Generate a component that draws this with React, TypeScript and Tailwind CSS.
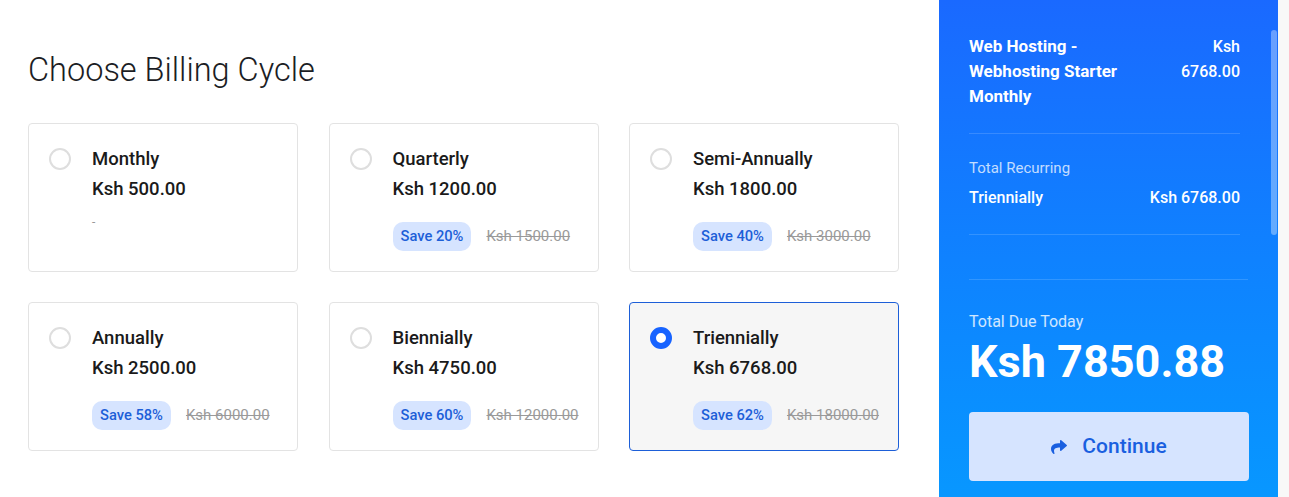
import React from 'react';
import { FaShare } from 'react-icons/fa';

interface Cycle {
  name: string;
  price: string;
  save?: string;
  was?: string;
}

const cycles: Cycle[] = [
  { name: 'Monthly', price: 'Ksh 500.00' },
  { name: 'Quarterly', price: 'Ksh 1200.00', save: 'Save 20%', was: 'Ksh 1500.00' },
  { name: 'Semi-Annually', price: 'Ksh 1800.00', save: 'Save 40%', was: 'Ksh 3000.00' },
  { name: 'Annually', price: 'Ksh 2500.00', save: 'Save 58%', was: 'Ksh 6000.00' },
  { name: 'Biennially', price: 'Ksh 4750.00', save: 'Save 60%', was: 'Ksh 12000.00' },
  { name: 'Triennially', price: 'Ksh 6768.00', save: 'Save 62%', was: 'Ksh 18000.00' },
];

const CycleCard: React.FC<{ cycle: Cycle; selected: boolean }> = ({ cycle, selected }) => {
  return (
    <div
      className={`h-[149px] rounded-[4px] border flex px-5 pt-[20px] ${
        selected ? 'bg-[#f6f6f6] border-[#1d5fd8]' : 'bg-white border-[#e3e3e3]'
      }`}
    >
      <div className="pt-[4px] shrink-0">
        {selected ? (
          <div className="w-[22px] h-[22px] rounded-full border-[6px] border-[#1763ff] bg-white" />
        ) : (
          <div className="w-[22px] h-[22px] rounded-full border-2 border-[#dedede] bg-white" />
        )}
      </div>
      <div className="ml-[21px] whitespace-nowrap">
        <div className="text-[18.5px] leading-[30px] font-medium text-[#1a1a1a]">{cycle.name}</div>
        <div className="text-[18.5px] leading-[30px] font-medium text-[#1a1a1a]">{cycle.price}</div>
        {cycle.save ? (
          <div className="mt-[18px] flex items-center">
            <span className="shrink-0 h-[29px] px-[8px] rounded-[10px] bg-[#d6e4ff] text-[#1d5fd8] text-[14.7px] font-medium flex items-center">
              {cycle.save}
            </span>
            <span className="shrink-0 ml-[15px] text-[15px] text-[#9a9a9a] line-through">{cycle.was}</span>
          </div>
        ) : (
          <div className="mt-[10px] text-[12px] leading-[16px] text-[#999]">-</div>
        )}
      </div>
    </div>
  );
};

const App: React.FC = () => {
  return (
    <div className="w-[1289px] h-[497px] flex bg-white overflow-hidden" style={{ fontFamily: 'Roboto, "Liberation Sans", sans-serif' }}>
      <div className="w-[939px] pl-[28px] pt-[51px]">
        <h1 className="text-[32.5px] leading-[38px] font-light text-[#1b1d24]">Choose Billing Cycle</h1>
        <div className="mt-[34px] w-[871px] grid grid-cols-3 gap-x-[30.5px] gap-y-[30px]">
          {cycles.map((c) => (
            <CycleCard key={c.name} cycle={c} selected={c.name === 'Triennially'} />
          ))}
        </div>
      </div>

      <div className="relative w-[339px] h-full bg-gradient-to-b from-[#1a69ff] to-[#0897ff] text-white flex flex-col">
        <div className="absolute right-[1px] top-[30px] w-[6px] h-[205px] rounded-full bg-white/35" />
        <div className="pl-[30px] pr-[38px] pt-[34px]">
          <div className="flex justify-between pb-[24px] border-b border-white/15">
            <div className="w-[170px] text-[17px] leading-[25px] font-bold">Web Hosting - Webhosting Starter Monthly</div>
            <div className="w-[70px] text-right text-[16px] leading-[25px] font-medium">Ksh 6768.00</div>
          </div>
          <div className="pt-[24px] pb-[26px] border-b border-white/15">
            <div className="text-[15px] leading-[20px] text-white/75">Total Recurring</div>
            <div className="mt-[10px] flex justify-between text-[16px] leading-[20px] font-medium">
              <span>Triennially</span>
              <span>Ksh 6768.00</span>
            </div>
          </div>
        </div>
        <div className="mt-[44px] mx-[30px] border-t border-white/15 pt-[32px]">
          <div className="text-[16px] leading-[20px] text-white/80">Total Due Today</div>
          <div className="mt-[2px] text-[45px] leading-[56px] font-bold">Ksh 7850.88</div>
          <button className="mt-[22px] w-[280px] h-[69px] rounded-[4px] bg-[#d6e4ff] text-[#1a5fe0] flex items-center justify-center gap-[15px] text-[21px] font-medium">
            <FaShare className="w-[16px] h-[16px]" />
            Continue
          </button>
        </div>
      </div>
      <div className="w-[11px] h-full bg-[#f8f8f8]" />
    </div>
  );
};

export default App;
